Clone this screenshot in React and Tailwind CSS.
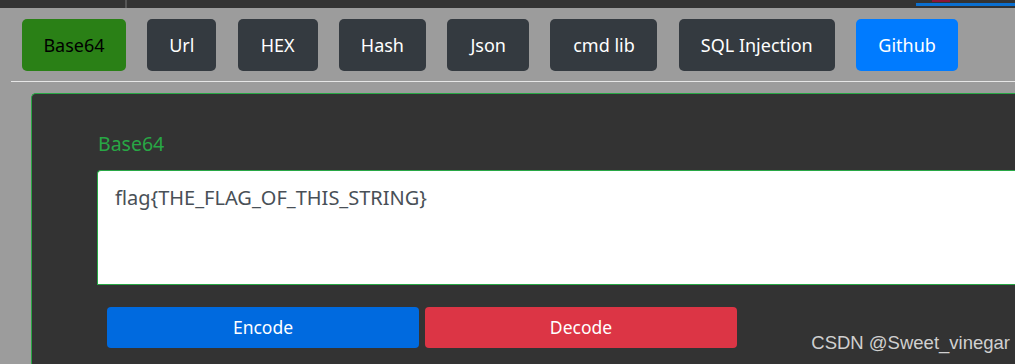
const tabs = [
  { label: 'Base64', cls: 'w-[104px] bg-[#2a8016] text-black' },
  { label: 'Url', cls: 'w-[69px] bg-[#343a40] text-white' },
  { label: 'HEX', cls: 'w-[80px] bg-[#343a40] text-white' },
  { label: 'Hash', cls: 'w-[87px] bg-[#343a40] text-white' },
  { label: 'Json', cls: 'w-[82px] bg-[#343a40] text-white' },
  { label: 'cmd lib', cls: 'w-[107px] bg-[#343a40] text-white' },
  { label: 'SQL Injection', cls: 'w-[156px] bg-[#343a40] text-white' },
  { label: 'Github', cls: 'w-[102px] bg-[#007bff] text-white' },
];

export default function App() {
  return (
    <div className="relative h-[364px] w-[1015px] overflow-hidden bg-[#9c9c9c] font-['Noto_Sans','Open_Sans',sans-serif]">
      {/* window strip */}
      <div className="flex h-[8px] bg-[#333]">
        <div className="w-[125px]" />
        <div className="w-[2px] bg-[#555]" />
        <div className="w-[789px]" />
        <div className="relative w-[99px]">
          <div className="absolute left-[16px] top-0 h-[2px] w-[18px] bg-[#8a1538]" />
          <div className="mt-[3px] h-[3px] bg-[#0a6fd0]" />
        </div>
      </div>

      <nav className="flex gap-[21.3px] pl-[22px] pt-[11px]">
        {tabs.map((t) => (
          <button
            key={t.label}
            className={`h-[52px] shrink-0 rounded-[5px] text-center text-[18px] leading-none ${t.cls}`}
          >
            {t.label}
          </button>
        ))}
      </nav>

      <div className="ml-[11px] mt-[10px] h-px bg-[#e6e6e6]" />

      <div className="ml-[31px] mt-[11px] h-[300px] rounded-tl-[5px] border-l border-t border-[#28a745] bg-[#333]">
        <div className="pl-[66px] pt-[36px]">
          <label className="block text-[19.5px] leading-[27px] text-[#28a745]">Base64</label>
        </div>
        <div className="ml-[65px] mt-[13px] h-[115px] rounded-tl-[4px] border border-r-0 border-[#28a745] bg-white px-[17px] pt-[12px] text-[20px] text-[#495057]">
          flag{'{'}THE_FLAG_OF_THIS_STRING{'}'}
        </div>
        <div className="ml-[75px] mt-[22px] flex gap-[6px]">
          <button className="h-[41px] w-[312px] rounded-[4px] bg-[#006adf] text-[17.5px] text-white">Encode</button>
          <button className="h-[41px] w-[312px] rounded-[4px] bg-[#dc3545] text-[17.5px] text-white">Decode</button>
        </div>
      </div>

      <div className="absolute bottom-[7px] right-[5px] font-['Liberation_Sans',sans-serif] text-[18.5px] text-[#d0d0d0]">
        CSDN @Sweet_vinegar
      </div>
    </div>
  );
}
